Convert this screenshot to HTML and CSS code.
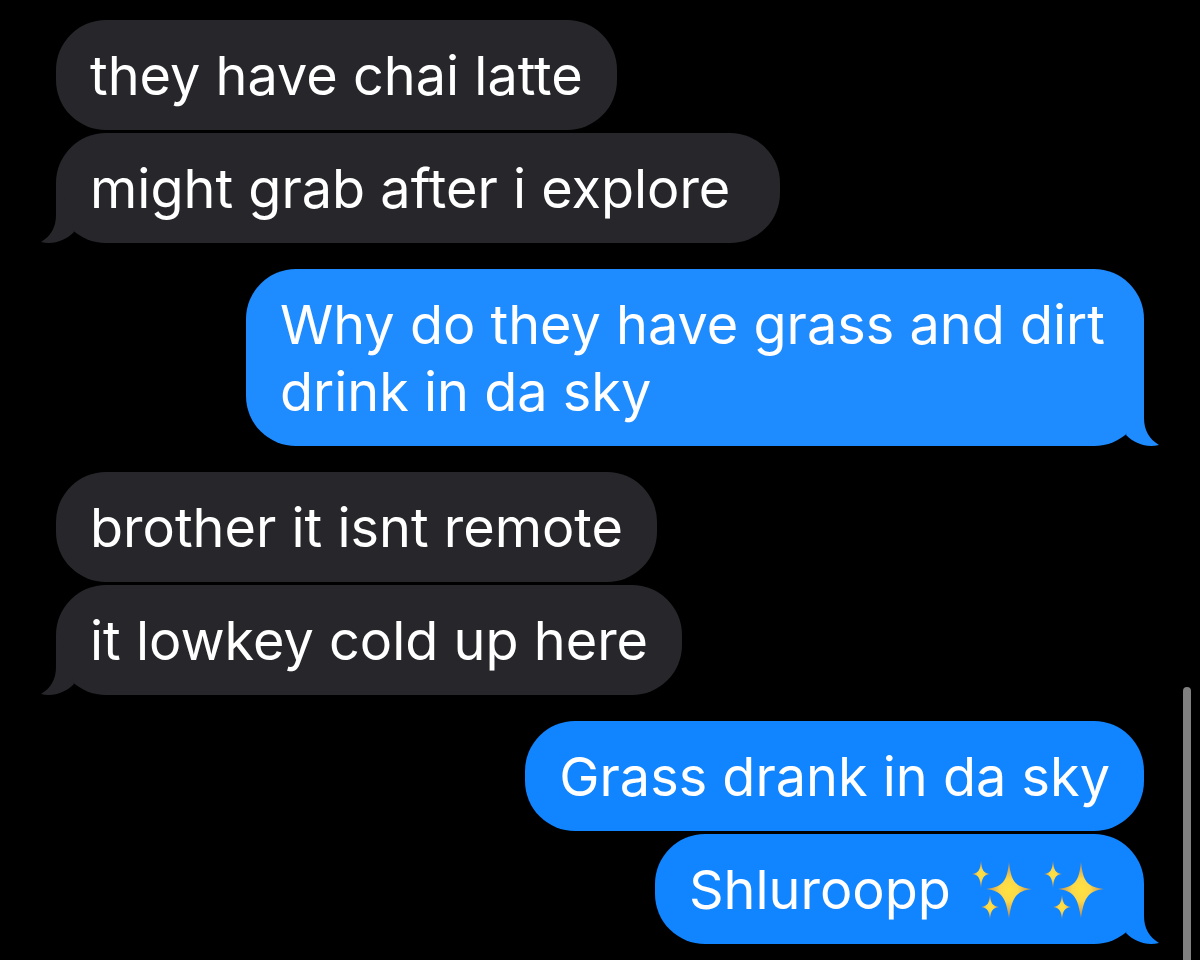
FILE: index.html
```
<!DOCTYPE html>
<html lang="en">
<head>
    <meta charset="UTF-8">
    <meta name="viewport" content="width=device-width, initial-scale=1.0">
    <title>Messages</title>
    <link rel="stylesheet" href="styles.css">
</head>
<body>
    <!-- Shared shapes -->
    <svg class="shapes" aria-hidden="true">
        <defs>
            <radialGradient id="gold">
                <stop offset="0" stop-color="#ffe23f"/>
                <stop offset="0.4" stop-color="#fbd84a"/>
                <stop offset="1" stop-color="#b98a5c"/>
            </radialGradient>
            <symbol id="tail" viewBox="0 0 60 50">
                <path d="M45 0V22C45 34 50 43 60 49C48 52 36 48 27 39L38 0Z"/>
            </symbol>
            <symbol id="sparkles" viewBox="0 0 60 60">
                <g fill="url(#gold)">
                    <path d="M37 2C39 20 42 27 60 29C43 31 40 39 37 58C34 39 31 31 14 29C32 27 35 20 37 2Z"/>
                    <path d="M9 1C10 10 11 13 18 14C11 15 10 18 9 28C8 18 7 15 0 14C7 13 8 10 9 1Z"/>
                    <path d="M18 35C19 43 20 46 27 47C20 48 19 51 18 59C17 51 16 48 9 47C16 46 17 43 18 35Z"/>
                </g>
            </symbol>
        </defs>
    </svg>

    <main class="chat">
        <div class="group received">
            <p class="bubble">they have chai latte</p>
            <p class="bubble">might grab after i explore&nbsp;<svg class="tail"><use href="#tail"/></svg></p>
        </div>

        <div class="group sent">
            <p class="bubble light">Why do they have grass and dirt drink in da sky<svg class="tail"><use href="#tail"/></svg></p>
        </div>

        <div class="group received">
            <p class="bubble">brother it isnt remote</p>
            <p class="bubble">it lowkey cold up here<svg class="tail"><use href="#tail"/></svg></p>
        </div>

        <div class="group sent">
            <p class="bubble">Grass drank in da sky</p>
            <p class="bubble">Shluroopp <svg class="emoji" role="img" aria-label="sparkles"><use href="#sparkles"/></svg><svg class="emoji" role="img" aria-label="sparkles"><use href="#sparkles"/></svg><svg class="tail"><use href="#tail"/></svg></p>
        </div>
    </main>

    <div class="scroll-thumb"></div>
</body>
</html>
```

FILE: styles.css
```
* {
    box-sizing: border-box;
}

body {
    margin: 0;
    background-color: #000;
    color: #fff;
    font-family: Inter, "Liberation Sans", sans-serif;
    font-size: 54px;
    line-height: 67px;
    overflow: hidden;
}

.shapes {
    position: absolute;
    width: 0;
    height: 0;
}

.chat {
    display: flex;
    flex-direction: column;
    gap: 26px;
    padding: 20px 56px 15px;
}

.group {
    display: flex;
    flex-direction: column;
    gap: 3px;
}

.received {
    align-items: flex-start;
}

.sent {
    align-items: flex-end;
}

.bubble {
    position: relative;
    max-width: 898px;
    margin: 0;
    padding: 22px 34px 21px;
    border-radius: 50px;
}

.received .bubble {
    background-color: #27262b;
    fill: #27262b;
}

.sent .bubble {
    background-color: #1085ff;
    fill: #1085ff;
}

.sent .bubble.light {
    background-color: #1e8bff;
    fill: #1e8bff;
}

/* Tail on the last bubble of a group */
.tail {
    position: absolute;
    right: -15px;
    bottom: 0;
    width: 60px;
    height: 50px;
}

.received .tail {
    right: auto;
    left: -15px;
    transform: scaleX(-1);
}

.emoji {
    width: 60px;
    height: 60px;
    margin: 4px 6px 3px;
    vertical-align: top;
}

.scroll-thumb {
    position: fixed;
    top: 687px;
    right: 9px;
    bottom: 0;
    width: 8px;
    background-color: #808080;
    border-radius: 4px 4px 0 0;
}
```
